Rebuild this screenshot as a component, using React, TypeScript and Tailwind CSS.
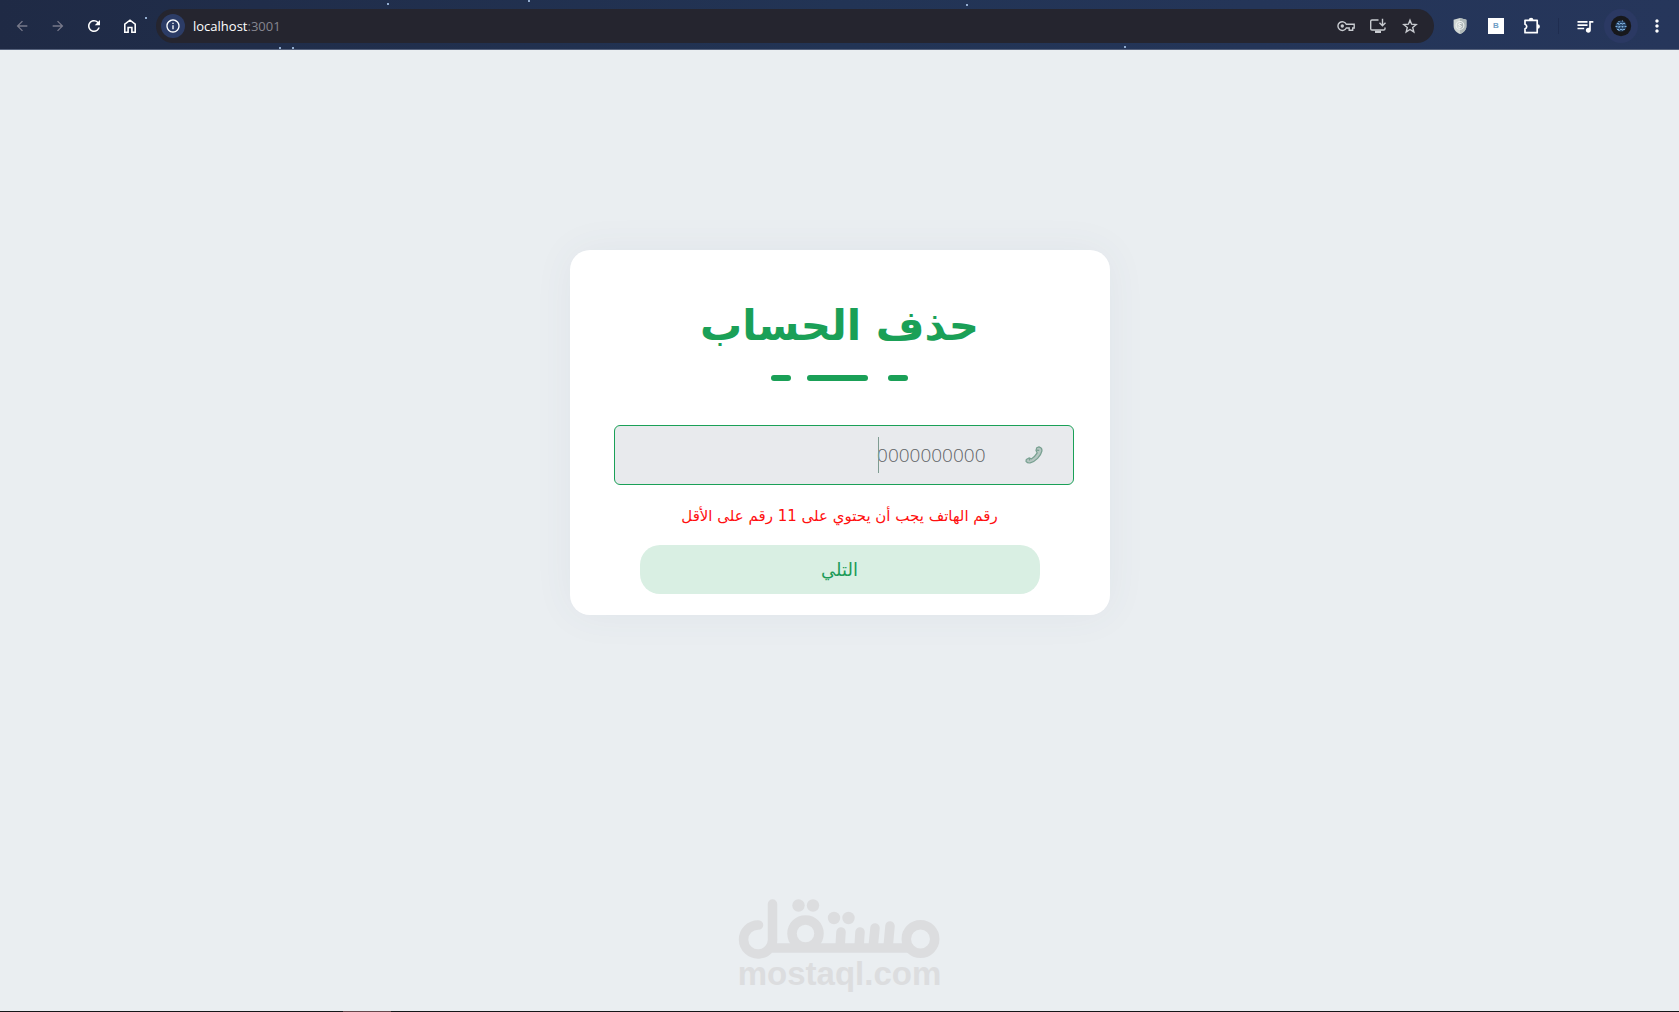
import { useState } from "react";
import type { ReactNode } from "react";
import { MdArrowBack, MdArrowForward, MdInfoOutline, MdMoreVert, MdQueueMusic, MdRefresh } from "react-icons/md";

const stars = [
  "left-[145px] top-[17px]",
  "left-[387px] top-[3px]",
  "left-[528px] top-0",
  "left-[966px] top-[4px]",
  "left-[279px] top-[47px]",
  "left-[292px] top-[47px]",
  "left-[1124px] top-[46px]",
];

function BarButton({ label, children, color = "text-white" }: { label: string; children: ReactNode; color?: string }) {
  return (
    <button type="button" aria-label={label} className={`flex h-7 w-7 shrink-0 items-center justify-center ${color}`}>
      {children}
    </button>
  );
}

function HomeIcon() {
  return (
    <svg viewBox="0 0 16 16" className="h-4 w-4" fill="none" stroke="currentColor" strokeWidth="1.6">
      <path d="M2.8 14.200V6.200L8 2.200l5.200 4v8H9.900V9.500H6.100v4.700Z" />
    </svg>
  );
}

function KeyIcon() {
  return (
    <svg viewBox="0 0 18 12" className="h-3 w-[18px]" fill="none" stroke="currentColor" strokeWidth="1.4">
      <path d="M9.300 4.200H17.200V8H15.700V10.300H12.200V8H9.300A4.400 4.400 0 1 1 9.300 4.200Z" />
      <circle cx="5.300" cy="6" r="1.700" fill="currentColor" stroke="none" />
    </svg>
  );
}

function InstallIcon() {
  return (
    <svg viewBox="0 0 18 16" className="h-4 w-[18px]" fill="none" stroke="currentColor" strokeWidth="1.4">
      <path d="M9.500 2H3Q1.700 2 1.700 3.200v7.600Q1.700 12 3 12h11.700Q16 12 16 10.800V9.500" />
      <path d="M6 13.800h6" strokeWidth="2.400" />
      <path d="M13.500.800v6.700M10.500 4.700l3 3 3-3" />
    </svg>
  );
}

function StarIcon() {
  return (
    <svg viewBox="0 0 16 16" className="h-4 w-4" fill="none" stroke="currentColor" strokeWidth="1.4">
      <path d="m8 2.200 1.600 4 4.600.4-3.500 2.900 1.100 4.400L8 11.500l-3.800 2.400 1.100-4.400L1.800 6.600l4.600-.4Z" />
    </svg>
  );
}

function ShieldIcon() {
  return (
    <svg viewBox="0 0 14 16" className="h-4 w-[14px]">
      <path d="M7 0 13.4 1.8V8c0 4-3 6.600-6.400 8C3.600 14.600.600 12 .600 8V1.800Z" fill="#d0d6d4" />
      <path d="M7 0 13.4 1.8V8c0 4-3 6.6-6.4 8Z" fill="#afb8b8" />
      <circle cx="7" cy="7.4" r="3.9" fill="none" stroke="#edf0ef" strokeWidth="1.1" />
      <path d="M8.700 5.800Q7 4.800 5.600 6.200 5.600 7.300 7 7.500T8.400 8.900Q7 10 5.300 9" fill="none" stroke="#f4f5f5" />
    </svg>
  );
}

function PuzzleIcon() {
  return (
    <svg viewBox="0 0 18 18" className="h-[18px] w-[18px]">
      <path d="M2 3.300h12.200v12.400H2v-3.900a2.400 2.400 0 0 0 0-4.600Z" fill="none" stroke="currentColor" strokeWidth="1.700" strokeLinejoin="round" />
      <path d="M5.800 3a2.300 2.300 0 0 1 4.600 0ZM14.600 7.200a2.300 2.300 0 0 1 0 4.600Z" fill="currentColor" />
    </svg>
  );
}

function AvatarIcon() {
  return (
    <svg viewBox="0 0 34 34" className="h-[34px] w-[34px] shrink-0">
      <circle cx="17" cy="17" r="17" fill="#2b3963" />
      <circle cx="17" cy="17" r="10.200" fill="#17181c" />
      <circle cx="17" cy="17" r="5.500" fill="#29486b" />
      <path d="M13 14.500h9M11.500 17.500h11M13 20.500h8" stroke="#79abd8" strokeDasharray="2 1" />
      <path d="M15 12v10M18.500 11.500v11" stroke="#8fb9dd" strokeDasharray="1 2" />
    </svg>
  );
}

function PhoneIcon() {
  return (
    <svg viewBox="0 0 18 18" className="h-[18px] w-[18px] shrink-0" fill="#b4c6c1" stroke="#78a091" strokeWidth="1.2" strokeLinejoin="round">
      <path d="M11.700 1.800 14 .900Q17.400 2 16.900 5C15.700 10.300 10.600 15.600 5.200 16.900Q2.600 17.400 1 15.300L1.300 13.400 4 11.900 6.300 12.900Q10.200 10.400 12.200 6.900L11 4.400Z" />
      <path d="m11.200 4.200 3 .2M4.300 12.200l.3 2.300" fill="none" />
    </svg>
  );
}

function BrowserBar() {
  return (
    <header className="relative flex h-[50px] items-center overflow-hidden border-b border-[#56627c] bg-linear-to-r from-[#1f2a45] via-[#223455] via-50% to-[#26365b] px-2 pb-px pt-[3px]">
      {stars.map((star) => (
        <span key={star} className={`absolute h-0.5 w-0.5 bg-[#93add0] ${star}`} />
      ))}
      <nav className="flex gap-2">
        <BarButton label="Back" color="text-[#77798a]"><MdArrowBack className="h-4 w-4" /></BarButton>
        <BarButton label="Forward" color="text-[#77798a]"><MdArrowForward className="h-4 w-4" /></BarButton>
        <BarButton label="Reload"><MdRefresh className="h-[18px] w-[18px]" /></BarButton>
        <BarButton label="Home"><HomeIcon /></BarButton>
      </nav>
      <div className="ml-3 flex h-[34px] grow items-center rounded-full bg-[#25252f] pl-[5px] pr-2.5">
        <button type="button" aria-label="Site information" className="flex h-6 w-6 items-center justify-center rounded-full bg-[#2c3c66] text-white">
          <MdInfoOutline className="h-4 w-4" />
        </button>
        <p className="ml-2 grow font-['Open_Sans',sans-serif] text-[13px] leading-5 text-[#85858f]">
          <span className="text-white">localhost</span>:3001
        </p>
        <div className="flex gap-1">
          <BarButton label="Passwords" color="text-[#c8cbd0]"><KeyIcon /></BarButton>
          <BarButton label="Install" color="text-[#c8cbd0]"><InstallIcon /></BarButton>
          <BarButton label="Bookmark" color="text-[#c8cbd0]"><StarIcon /></BarButton>
        </div>
      </div>
      <div className="ml-3 flex items-center gap-2">
        <BarButton label="Shield"><ShieldIcon /></BarButton>
        <BarButton label="Extension B">
          <span className="flex h-4 w-4 items-center justify-center bg-white font-['Liberation_Sans',sans-serif] text-[8px] font-bold text-[#6e9cc4]">B</span>
        </BarButton>
        <BarButton label="Extensions"><PuzzleIcon /></BarButton>
        <span className="mx-1 h-4 w-px bg-[#1f2d50]" />
        <BarButton label="Media"><MdQueueMusic className="h-5 w-5" /></BarButton>
        <BarButton label="Profile"><AvatarIcon /></BarButton>
        <BarButton label="Menu"><MdMoreVert className="h-5 w-5" /></BarButton>
      </div>
    </header>
  );
}

function Watermark() {
  return (
    <div className="flex flex-col items-center text-[#dcdddf]">
      <svg viewBox="0 0 202 60" className="h-[60px] w-[202px]" role="img" aria-label="مستقل" fill="none" stroke="currentColor" strokeWidth="9.500" strokeLinecap="round">
        <circle cx="182.500" cy="40" r="14.200" />
        <circle cx="67.500" cy="34.500" r="13.500" />
        <path d="M34.500 5V39A14.500 14.500 0 1 1 20.500 26M32 49H171M102 49l1-16M121 49l1-16M135 49l2-20M150 49l2-22" />
        <g fill="currentColor" stroke="none">
          <circle cx="60.500" cy="6.500" r="6.200" />
          <circle cx="75" cy="6.500" r="6.200" />
          <circle cx="96" cy="19" r="6.200" />
          <circle cx="110.500" cy="19" r="6.200" />
        </g>
      </svg>
      <p className="font-['Liberation_Sans',sans-serif] text-[33px] font-bold leading-[30px]">mostaql.com</p>
    </div>
  );
}

export default function App() {
  const [phone, setPhone] = useState("0000000000");

  return (
    <div className="flex min-h-screen flex-col bg-[#eaeef1]">
      <BrowserBar />
      <main className="flex grow flex-col items-center px-4 pt-[200px]">
        <form
          dir="rtl"
          onSubmit={(event) => event.preventDefault()}
          className="flex w-full max-w-[540px] flex-col items-center rounded-[20px] bg-white pb-[21px] pt-11 font-['DejaVu_Sans',sans-serif] shadow-[0_0_40px_rgba(60,90,120,0.06)]"
        >
          <h1 className="text-[42px] font-bold leading-[64px] text-[#1aa057]">حذف الحساب</h1>
          <div className="mt-[17px] flex">
            <span className="h-1.5 w-5 rounded-full bg-[#1aa057]" />
            <span className="mr-5 h-1.5 w-[61px] rounded-full bg-[#1aa057]" />
            <span className="mr-4 h-1.5 w-5 rounded-full bg-[#1aa057]" />
          </div>
          <div className="mt-11 w-full pl-11 pr-9">
            <div className="flex h-[60px] items-center rounded-md border border-[#1aa057] bg-[#e8eaed] pr-[30px]">
              <PhoneIcon />
              <div className="relative mr-[39px] grow">
                <input
                  type="text"
                  inputMode="tel"
                  aria-label="رقم الهاتف"
                  value={phone}
                  onChange={(event) => setPhone(event.target.value)}
                  className="block h-9 w-full bg-transparent font-['Open_Sans',sans-serif] text-[19px] font-light text-[#5e6265] outline-none"
                />
                <span className="absolute right-[107px] top-0 h-9 w-px bg-[#7f9c92]" />
              </div>
            </div>
          </div>
          <p className="mt-[19px] text-[15px] leading-6 text-[#ff1010]">رقم الهاتف يجب أن يحتوي على 11 رقم على الأقل</p>
          <button type="submit" className="mt-[17px] h-[49px] w-[400px] max-w-full rounded-[20px] bg-[#d9efe3] text-[18px] text-[#1c9b58]">
            التلي
          </button>
        </form>
        <div className="mt-auto pb-[22px] pt-8">
          <Watermark />
        </div>
      </main>
      <footer className="flex h-px bg-[#151518]">
        <span className="ml-[343px] w-12 bg-[#67484d]" />
      </footer>
    </div>
  );
}
